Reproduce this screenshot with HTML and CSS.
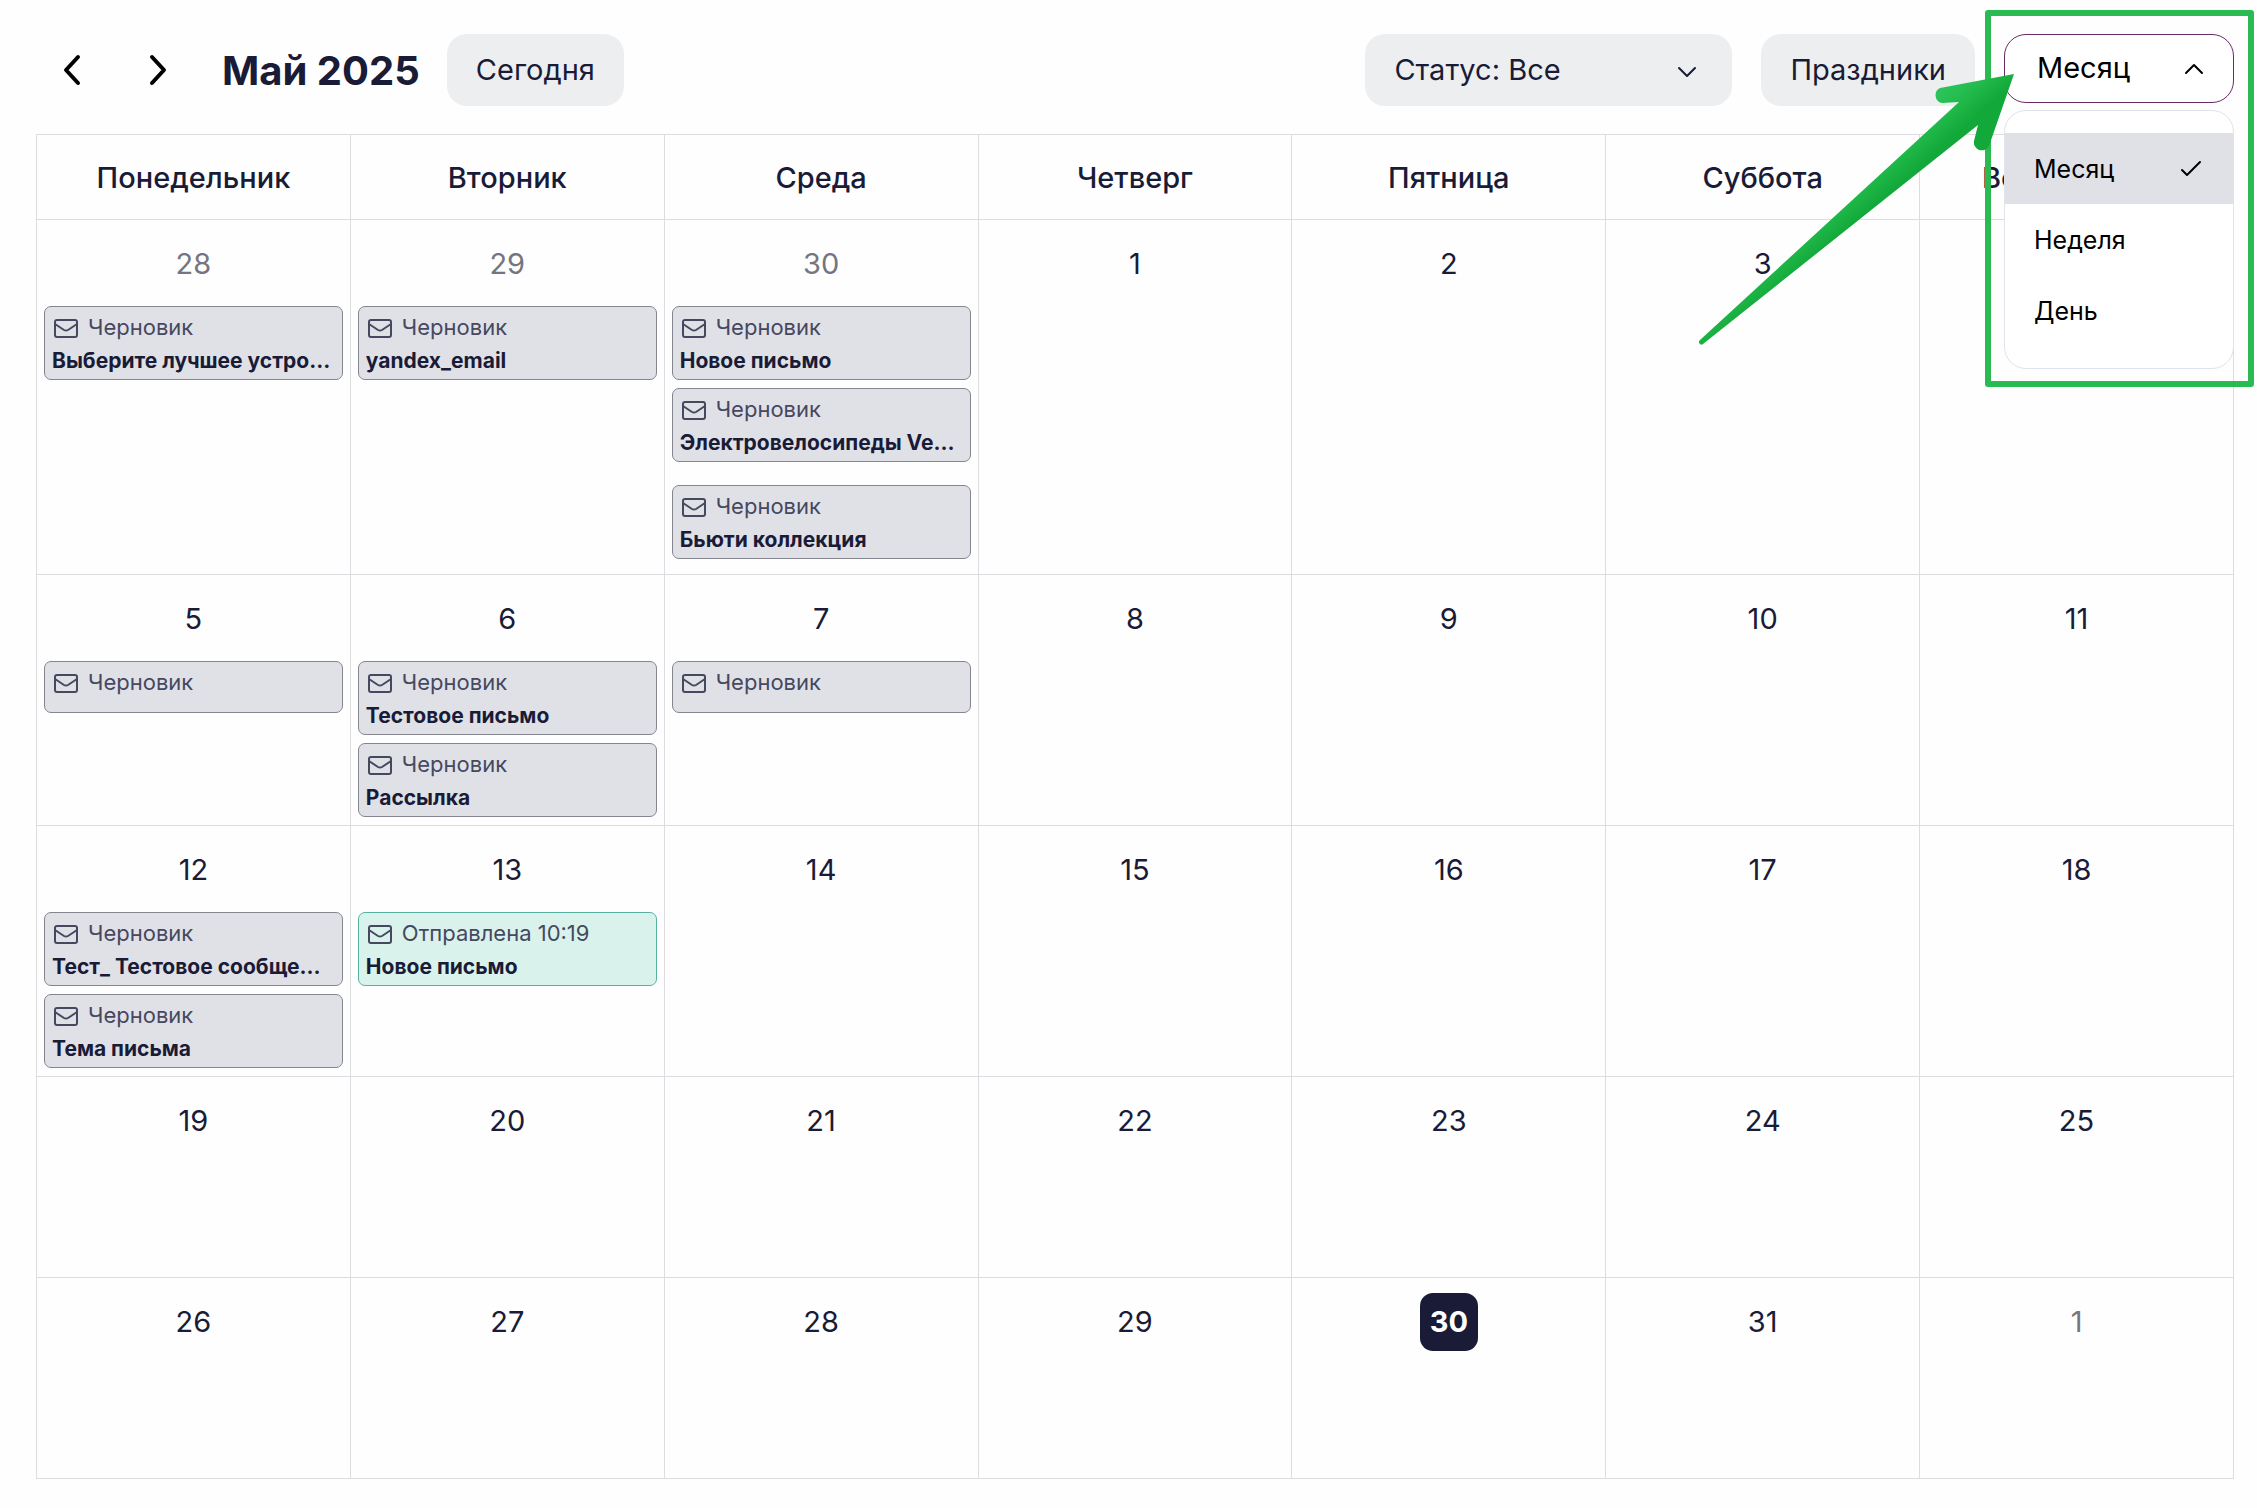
FILE: index.html
```
<!DOCTYPE html>
<html lang="ru">
<head>
    <meta charset="UTF-8">
    <meta name="viewport" content="width=device-width, initial-scale=1.0">
    <title>Календарь рассылок</title>
    <link rel="stylesheet" href="styles.css">
</head>
<body>
    <svg class="sprite" aria-hidden="true">
        <symbol id="icon-mail" viewBox="0 0 26 22">
            <rect x="2" y="3" width="22" height="17" rx="2" fill="none" stroke="currentColor" stroke-width="2"/>
            <path d="M2 7 L11 13 Q13 14.200 15 13 L24 7" fill="none" stroke="currentColor" stroke-width="2"/>
        </symbol>
    </svg>

    <header class="toolbar">
        <button class="nav-btn" type="button" aria-label="Предыдущий месяц">
            <svg width="20" height="32" viewBox="0 0 20 32"><path d="M16 3 L4 16 L16 29"/></svg>
        </button>
        <button class="nav-btn" type="button" aria-label="Следующий месяц">
            <svg width="20" height="32" viewBox="0 0 20 32"><path d="M4 3 L16 16 L4 29"/></svg>
        </button>
        <h1 class="title">Май 2025</h1>
        <button class="btn" type="button">Сегодня</button>

        <div class="filters">
            <div class="select status-select">
                <select aria-label="Статус">
                    <option>Статус: Все</option>
                    <option>Статус: Черновик</option>
                    <option>Статус: Отправлена</option>
                </select>
                <svg class="chevron" width="20" height="14" viewBox="0 0 20 14"><path d="M2 3 L10 11 L18 3"/></svg>
            </div>
            <button class="btn" type="button">Праздники</button>
            <div class="view">
                <div class="select view-select">
                    <select aria-label="Период">
                        <option>Месяц</option>
                        <option>Неделя</option>
                        <option>День</option>
                    </select>
                    <svg class="chevron" width="20" height="14" viewBox="0 0 20 14"><path d="M2 11 L10 3 L18 11"/></svg>
                </div>
                <div class="view-menu">
                    <button class="view-item active" type="button">Месяц
                        <svg width="24" height="20" viewBox="0 0 24 20"><path d="M3 11 L8 16 L21 3"/></svg>
                    </button>
                    <button class="view-item" type="button">Неделя</button>
                    <button class="view-item" type="button">День</button>
                </div>
                <div class="highlight"></div>
                <svg class="pointer" width="340" height="290" viewBox="0 0 340 290" aria-hidden="true">
                    <defs>
                        <linearGradient id="pointer-fill" gradientUnits="userSpaceOnUse" x1="188" y1="86" x2="216" y2="118">
                            <stop offset="0" stop-color="#2cc45a"/>
                            <stop offset="0.5" stop-color="#22b94b"/>
                            <stop offset="1" stop-color="#12a83a"/>
                        </linearGradient>
                    </defs>
                    <path fill="url(#pointer-fill)" d="M324 14 L250 28 A8 8 0 0 0 252 43 L269 42 L10 280 A2.500 2.500 0 0 0 13 284 L288 65 L284 81 A8 8 0 0 0 299 86 Z"/>
                </svg>
            </div>
        </div>
    </header>

    <main>
        <table class="calendar">
            <thead>
                <tr>
                    <th>Понедельник</th>
                    <th>Вторник</th>
                    <th>Среда</th>
                    <th>Четверг</th>
                    <th>Пятница</th>
                    <th>Суббота</th>
                    <th>Воскресенье</th>
                </tr>
            </thead>
            <tbody>
                <tr>
                    <td>
                        <div class="day other">28</div>
                        <div class="event">
                            <div class="status"><svg class="mail"><use href="#icon-mail"/></svg>Черновик</div>
                            <div class="name">Выберите лучшее устройство</div>
                        </div>
                    </td>
                    <td>
                        <div class="day other">29</div>
                        <div class="event">
                            <div class="status"><svg class="mail"><use href="#icon-mail"/></svg>Черновик</div>
                            <div class="name">yandex_email</div>
                        </div>
                    </td>
                    <td>
                        <div class="day other">30</div>
                        <div class="event">
                            <div class="status"><svg class="mail"><use href="#icon-mail"/></svg>Черновик</div>
                            <div class="name">Новое письмо</div>
                        </div>
                        <div class="event">
                            <div class="status"><svg class="mail"><use href="#icon-mail"/></svg>Черновик</div>
                            <div class="name">Электровелосипеды Vemoto</div>
                        </div>
                        <div class="event separate">
                            <div class="status"><svg class="mail"><use href="#icon-mail"/></svg>Черновик</div>
                            <div class="name">Бьюти коллекция</div>
                        </div>
                    </td>
                    <td><div class="day">1</div></td>
                    <td><div class="day">2</div></td>
                    <td><div class="day">3</div></td>
                    <td></td>
                </tr>
                <tr>
                    <td>
                        <div class="day">5</div>
                        <div class="event">
                            <div class="status"><svg class="mail"><use href="#icon-mail"/></svg>Черновик</div>
                            <div class="name"></div>
                        </div>
                    </td>
                    <td>
                        <div class="day">6</div>
                        <div class="event">
                            <div class="status"><svg class="mail"><use href="#icon-mail"/></svg>Черновик</div>
                            <div class="name">Тестовое письмо</div>
                        </div>
                        <div class="event">
                            <div class="status"><svg class="mail"><use href="#icon-mail"/></svg>Черновик</div>
                            <div class="name">Рассылка</div>
                        </div>
                    </td>
                    <td>
                        <div class="day">7</div>
                        <div class="event">
                            <div class="status"><svg class="mail"><use href="#icon-mail"/></svg>Черновик</div>
                            <div class="name"></div>
                        </div>
                    </td>
                    <td><div class="day">8</div></td>
                    <td><div class="day">9</div></td>
                    <td><div class="day">10</div></td>
                    <td><div class="day">11</div></td>
                </tr>
                <tr>
                    <td>
                        <div class="day">12</div>
                        <div class="event">
                            <div class="status"><svg class="mail"><use href="#icon-mail"/></svg>Черновик</div>
                            <div class="name">Тест_ Тестовое сообщение</div>
                        </div>
                        <div class="event">
                            <div class="status"><svg class="mail"><use href="#icon-mail"/></svg>Черновик</div>
                            <div class="name">Тема письма</div>
                        </div>
                    </td>
                    <td>
                        <div class="day">13</div>
                        <div class="event sent">
                            <div class="status"><svg class="mail"><use href="#icon-mail"/></svg>Отправлена 10:19</div>
                            <div class="name">Новое письмо</div>
                        </div>
                    </td>
                    <td><div class="day">14</div></td>
                    <td><div class="day">15</div></td>
                    <td><div class="day">16</div></td>
                    <td><div class="day">17</div></td>
                    <td><div class="day">18</div></td>
                </tr>
                <tr>
                    <td><div class="day">19</div></td>
                    <td><div class="day">20</div></td>
                    <td><div class="day">21</div></td>
                    <td><div class="day">22</div></td>
                    <td><div class="day">23</div></td>
                    <td><div class="day">24</div></td>
                    <td><div class="day">25</div></td>
                </tr>
                <tr>
                    <td><div class="day">26</div></td>
                    <td><div class="day">27</div></td>
                    <td><div class="day">28</div></td>
                    <td><div class="day">29</div></td>
                    <td><div class="day today">30</div></td>
                    <td><div class="day">31</div></td>
                    <td><div class="day other">1</div></td>
                </tr>
            </tbody>
        </table>
    </main>
</body>
</html>
```
FILE: styles.css
```
* {
    box-sizing: border-box;
}

body {
    margin: 0;
    padding: 34px 23px 28px 36px;
    background: #fefefe;
    color: #191b37;
    font-family: Inter, "Liberation Sans", sans-serif;
    font-size: 29px;
}

button,
select {
    font: inherit;
    color: inherit;
    border: none;
    cursor: pointer;
}

svg path {
    stroke-linecap: round;
    stroke-linejoin: round;
}

.sprite {
    display: none;
}

/* toolbar */
.toolbar {
    display: flex;
    align-items: center;
    height: 72px;
    margin-bottom: 28px;
}

.nav-btn {
    display: flex;
    align-items: center;
    justify-content: center;
    width: 72px;
    height: 72px;
    margin-right: 14px;
    padding: 0;
    background: none;
}

.nav-btn path {
    fill: none;
    stroke: #000;
    stroke-width: 4;
}

.title {
    margin: 0 27px 0 14px;
    font-size: 40px;
    font-weight: 700;
}

.btn {
    height: 72px;
    padding: 0 29px 2px;
    border-radius: 20px;
    background: #edeef0;
}

.filters {
    display: flex;
    align-items: flex-start;
    gap: 29px;
    margin-left: auto;
}

.select {
    display: grid;
    align-items: center;
}

.select > * {
    grid-area: 1 / 1;
}

.select select {
    width: 100%;
    height: 72px;
    padding: 0 29px 2px;
    border-radius: 20px;
    background: #edeef0;
    appearance: none;
}

.chevron {
    justify-self: end;
    margin-right: 35px;
    pointer-events: none;
}

.chevron path {
    fill: none;
    stroke: currentColor;
    stroke-width: 2;
}

.status-select {
    width: 367px;
}

.status-select .chevron {
    margin-top: 4px;
}

.view {
    position: relative;
    width: 230px;
    color: #000;
}

.view-select select {
    height: 69px;
    padding: 0 32px 2px;
    border: 1px solid #6b2a68;
    border-radius: 22px;
    background: #fff;
}

.view-select .chevron {
    margin-right: 30px;
}

.view-menu {
    position: absolute;
    top: 76px;
    left: 0;
    right: 0;
    padding: 22px 0;
    border: 1px solid #dfe3ea;
    border-radius: 22px;
    background: #fff;
}

.view-item {
    display: flex;
    align-items: center;
    justify-content: space-between;
    width: 100%;
    height: 71px;
    padding: 0 30px 0 29px;
    background: none;
    font-size: 25px;
}

.view-item.active {
    background: #e0e1e7;
}

.view-item path {
    fill: none;
    stroke: #000;
    stroke-width: 2;
}

/* callout around the period menu */
.highlight {
    position: absolute;
    top: -24px;
    left: -19px;
    right: -20px;
    height: 377px;
    border: 6px solid #2aba52;
    border-radius: 3px;
    pointer-events: none;
}

.pointer {
    position: absolute;
    top: 26px;
    right: 204px;
    pointer-events: none;
}

/* calendar */
.calendar {
    width: 100%;
    table-layout: fixed;
    border-collapse: collapse;
}

.calendar th,
.calendar td {
    border: 1px solid #dcdde0;
}

.calendar th {
    height: 85px;
    padding: 0;
    font-weight: 500;
}

.calendar td {
    height: 201px;
    padding: 15px 7px 8px;
    vertical-align: top;
}

.day {
    width: 58px;
    height: 58px;
    margin: 0 auto 13px;
    line-height: 58px;
    text-align: center;
}

.day.other {
    color: #74757f;
}

.day.today {
    border-radius: 13px;
    background: #191b37;
    color: #fff;
    font-weight: 700;
}

.event {
    margin-top: 8px;
    padding: 4px 9px 2px 7px;
    border: 1px solid #84858f;
    border-radius: 7px;
    background: #e0e1e7;
    font-size: 22px;
    line-height: 33px;
}

.event.separate {
    margin-top: 23px;
    margin-bottom: 7px;
}

.event.sent {
    border-color: #57b3a0;
    background: #d9f3ec;
}

.status {
    display: flex;
    align-items: center;
    gap: 8px;
    color: #46485f;
}

.mail {
    width: 28px;
    height: 22px;
}

.name {
    min-height: 11px;
    overflow: hidden;
    font-size: 21px;
    font-weight: 700;
    text-overflow: ellipsis;
    white-space: nowrap;
}
```
